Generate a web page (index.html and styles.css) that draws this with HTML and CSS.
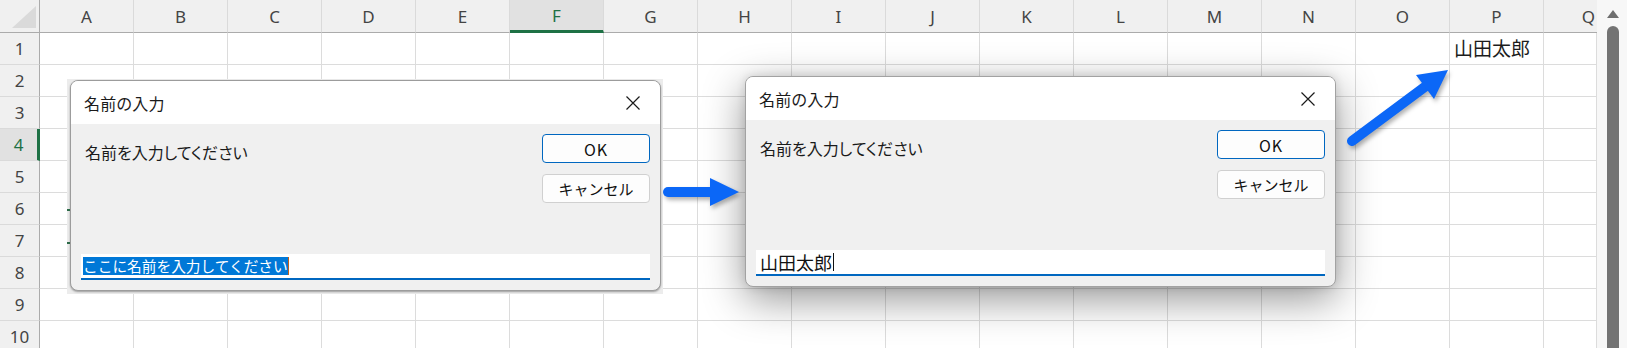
FILE: index.html
```html
<!DOCTYPE html>
<html lang="ja">
<head>
<meta charset="utf-8">
<title>Excel InputBox</title>
<link rel="stylesheet" href="styles.css">
</head>
<body>
<div class="screen">
  <div class="sheet">
    <div class="corner"><div class="tri"></div></div>
    <div class="ch">A</div><div class="ch">B</div><div class="ch">C</div><div class="ch">D</div><div class="ch">E</div><div class="ch sel">F</div><div class="ch">G</div><div class="ch">H</div><div class="ch">I</div><div class="ch">J</div><div class="ch">K</div><div class="ch">L</div><div class="ch">M</div><div class="ch">N</div><div class="ch">O</div><div class="ch">P</div><div class="ch qc">Q</div>

    <div class="rh">1</div><span></span><span></span><span></span><span></span><span></span><span></span><span></span><span></span><span></span><span></span><span></span><span></span><span></span><span></span><span></span><span class="val">山田太郎</span><span></span>
    <div class="rh">2</div><span></span><span></span><span></span><span></span><span></span><span></span><span></span><span></span><span></span><span></span><span></span><span></span><span></span><span></span><span></span><span></span><span></span>
    <div class="rh">3</div><span></span><span></span><span></span><span></span><span></span><span></span><span></span><span></span><span></span><span></span><span></span><span></span><span></span><span></span><span></span><span></span><span></span>
    <div class="rh sel">4</div><span></span><span></span><span></span><span></span><span></span><span></span><span></span><span></span><span></span><span></span><span></span><span></span><span></span><span></span><span></span><span></span><span></span>
    <div class="rh">5</div><span></span><span></span><span></span><span></span><span></span><span></span><span></span><span></span><span></span><span></span><span></span><span></span><span></span><span></span><span></span><span></span><span></span>
    <div class="rh">6</div><span></span><span></span><span></span><span></span><span></span><span></span><span></span><span></span><span></span><span></span><span></span><span></span><span></span><span></span><span></span><span></span><span></span>
    <div class="rh">7</div><span></span><span></span><span></span><span></span><span></span><span></span><span></span><span></span><span></span><span></span><span></span><span></span><span></span><span></span><span></span><span></span><span></span>
    <div class="rh">8</div><span></span><span></span><span></span><span></span><span></span><span></span><span></span><span></span><span></span><span></span><span></span><span></span><span></span><span></span><span></span><span></span><span></span>
    <div class="rh">9</div><span></span><span></span><span></span><span></span><span></span><span></span><span></span><span></span><span></span><span></span><span></span><span></span><span></span><span></span><span></span><span></span><span></span>
    <div class="rh">10</div><span></span><span></span><span></span><span></span><span></span><span></span><span></span><span></span><span></span><span></span><span></span><span></span><span></span><span></span><span></span><span></span><span></span>
  </div>
  <div class="vscroll">
    <div class="up"></div>
    <div class="thumb"></div>
  </div>

  <div class="shot1">
    <i class="tick t6"></i><i class="tick t7"></i>
    <div class="dlg">
      <div class="tbar">
        <span class="ttl">名前の入力</span>
        <svg class="close" width="14" height="14" viewBox="0 0 14 14"><path d="M0.5 0.5 L13.5 13.5 M13.5 0.5 L0.5 13.5" stroke="#1b1b1b" stroke-width="1.2" fill="none"/></svg>
      </div>
      <div class="body">
        <div class="toprow">
          <span class="prompt">名前を入力してください</span>
          <div class="btns">
            <button class="btn ok">OK</button>
            <button class="btn">キャンセル</button>
          </div>
        </div>
        <div class="field"><span class="seltext">ここに名前を入力してください</span><i class="caret"></i></div>
      </div>
    </div>
  </div>

  <div class="dlg d2">
    <div class="tbar">
      <span class="ttl">名前の入力</span>
      <svg class="close" width="14" height="14" viewBox="0 0 14 14"><path d="M0.5 0.5 L13.5 13.5 M13.5 0.5 L0.5 13.5" stroke="#1b1b1b" stroke-width="1.2" fill="none"/></svg>
    </div>
    <div class="body">
      <div class="toprow">
        <span class="prompt">名前を入力してください</span>
        <div class="btns">
          <button class="btn ok">OK</button>
          <button class="btn">キャンセル</button>
        </div>
      </div>
      <div class="field"><span class="typed">山田太郎</span><i class="caret dark"></i></div>
    </div>
  </div>

  <svg class="arrow a1" width="90" height="50" viewBox="660 168 90 50">
    <line x1="668" y1="192" x2="714" y2="192" stroke="#0b67f7" stroke-width="10" stroke-linecap="round"/>
    <polygon points="710,178 739,192 710,206" fill="#0b67f7"/>
  </svg>
  <svg class="arrow a2" width="120" height="100" viewBox="1340 60 120 100">
    <line x1="1352" y1="141" x2="1426" y2="86" stroke="#0b67f7" stroke-width="10" stroke-linecap="round"/>
    <polygon points="1448,70 1434,99 1416,75" fill="#0b67f7"/>
  </svg>
</div>
</body>
</html>
```

FILE: styles.css
```css
html, body {
  margin: 0;
  padding: 0;
  background: #ffffff;
}
.screen {
  position: relative;
  width: 1627px;
  height: 348px;
  overflow: hidden;
  display: flex;
  font-family: "Noto Sans", "Noto Sans CJK JP", sans-serif;
  color: #222;
}
.sheet {
  width: 1597px;
  display: grid;
  grid-template-columns: 40px repeat(16, 94px) 53px;
  grid-template-rows: 33px repeat(10, 32px);
  align-content: start;
}
.sheet > span {
  box-sizing: border-box;
  border-right: 1px solid #dcdcdc;
  border-bottom: 1px solid #dcdcdc;
  background: #fff;
}
.sheet > span.val {
  font-family: "Noto Sans CJK JP", sans-serif;
  font-size: 19px;
  line-height: 30px;
  padding-left: 4px;
  color: #1c1c1c;
  white-space: nowrap;
}
.corner {
  background: #f0f0f0;
  border-right: 1px solid #ababab;
  border-bottom: 1px solid #ababab;
  box-sizing: border-box;
  display: flex;
  justify-content: flex-end;
  align-items: flex-end;
  padding: 0 3px 4px 0;
}
.tri {
  width: 24px;
  height: 22px;
  background: #dadada;
  clip-path: polygon(100% 0, 100% 100%, 0 100%);
}
.ch {
  background: #f0f0f0;
  box-sizing: border-box;
  border-right: 1px solid #dadada;
  border-bottom: 1px solid #ababab;
  display: flex;
  align-items: center;
  justify-content: center;
  font-size: 17px;
  color: #444;
}
.ch.sel {
  background: #e1e1e1;
  color: #1e7145;
  border-bottom: 3px solid #1e7145;
}
.ch.qc {
  justify-content: flex-end;
  padding-right: 2px;
  border-right: none;
}
.rh {
  background: #f0f0f0;
  box-sizing: border-box;
  border-right: 1px solid #ababab;
  border-bottom: 1px solid #dadada;
  display: flex;
  align-items: center;
  justify-content: center;
  font-size: 17px;
  color: #444;
}
.rh.sel {
  background: #e1e1e1;
  color: #1e7145;
  border-right: 3px solid #1e7145;
}
.vscroll {
  width: 30px;
  background: #f7f7f7;
  position: relative;
  display: flex;
  flex-direction: column;
  align-items: center;
  padding-top: 10px;
  box-sizing: border-box;
}
.up {
  width: 12px;
  height: 8px;
  background: #6e6e6e;
  clip-path: polygon(50% 0, 100% 100%, 0 100%);
  margin-left: 2px;
}
.thumb {
  margin-top: 8px;
  margin-left: 2px;
  width: 12px;
  flex: 1;
  margin-bottom: -20px;
  background: #737373;
  border-radius: 6px;
}

/* dialogs */
.shot1 {
  position: absolute;
  left: 67px;
  top: 79px;
  width: 596px;
  height: 215px;
  background: #ececec;
  padding: 1px 2px 2px 3px;
  box-sizing: border-box;
}
.tick {
  position: absolute;
  left: 0;
  width: 3px;
  height: 2px;
  background: #2d6a48;
}
.t6 { top: 130px; }
.t7 { top: 163px; }
.dlg {
  width: 591px;
  height: 211px;
  box-sizing: border-box;
  border: 1px solid #a2a2a2;
  border-radius: 8px;
  background: #f0f0f0;
  display: flex;
  flex-direction: column;
  overflow: hidden;
  font-family: "Noto Sans CJK JP", sans-serif;
  color: #1a1a1a;
}
.shot1 .dlg {
  box-shadow: 0 1px 2px rgba(0, 0, 0, 0.35);
  border-color: #9c9c9c;
}
.d2 {
  position: absolute;
  left: 745px;
  top: 76px;
  box-shadow: 0 12px 42px rgba(0, 0, 0, 0.42), 0 0 10px rgba(0, 0, 0, 0.12);
}
.tbar {
  height: 43px;
  flex: none;
  background: #ffffff;
  display: flex;
  align-items: center;
  justify-content: space-between;
  padding: 0 20px 0 13px;
}
.ttl {
  font-size: 16px;
  font-feature-settings: "palt";
  letter-spacing: 0.3px;
}
.body {
  flex: 1;
  display: flex;
  flex-direction: column;
  padding: 10px 10px 10px 10px;
}
.toprow {
  display: flex;
  justify-content: space-between;
  align-items: flex-start;
}
.prompt {
  margin: 7px 0 0 4px;
  font-size: 16px;
  line-height: 22px;
  font-feature-settings: "palt";
}
.btns {
  display: flex;
  flex-direction: column;
  gap: 11px;
}
.btn {
  width: 108px;
  height: 29px;
  box-sizing: border-box;
  border: 1px solid #d0d0d0;
  border-radius: 4px;
  background: #fdfdfd;
  font-family: "Noto Sans CJK JP", sans-serif;
  font-size: 15px;
  color: #111;
  padding: 0;
}
.btn.ok {
  border-color: #0067c0;
  font-size: 16px;
  letter-spacing: 1px;
}
.field {
  margin-top: auto;
  height: 26px;
  box-sizing: border-box;
  background: #ffffff;
  border-bottom: 2px solid #0067c0;
  display: flex;
  align-items: center;
  padding-left: 2px;
}
.seltext {
  background: #0078d7;
  color: #ffffff;
  font-size: 14.7px;
  line-height: 18px;
  white-space: nowrap;
}
.typed {
  font-size: 18px;
  line-height: 20px;
  padding-left: 2px;
  color: #111;
}
.caret {
  width: 1px;
  height: 18px;
  background: #c0601a;
}
.caret.dark {
  background: #111;
  margin-left: 1px;
}

/* arrows */
.arrow {
  position: absolute;
  overflow: visible;
  filter: drop-shadow(2px 3px 2px rgba(0, 0, 0, 0.3));
}
.a1 { left: 660px; top: 168px; }
.a2 { left: 1340px; top: 60px; }
```
